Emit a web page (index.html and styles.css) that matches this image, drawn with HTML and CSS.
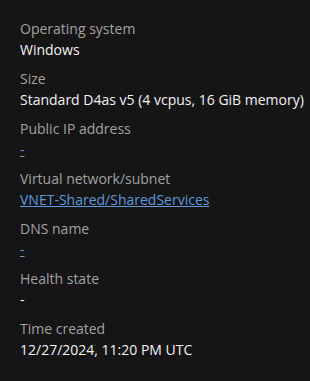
FILE: index.html
```html
<!DOCTYPE html>
<html lang="en">
  <head>
    <meta charset="UTF-8" />
    <title>VM properties</title>
    <link rel="stylesheet" href="styles.css">
  </head>
  <body>
    <dl class="props">
      <div class="prop">
        <dt>Operating system</dt>
        <dd>Windows</dd>
      </div>
      <div class="prop">
        <dt>Size</dt>
        <dd>Standard D4as v5 (4 vcpus, 16 GiB memory)</dd>
      </div>
      <div class="prop">
        <dt>Public IP address</dt>
        <dd><a href="#">-</a></dd>
      </div>
      <div class="prop">
        <dt>Virtual network/subnet</dt>
        <dd><a href="#">VNET-Shared/SharedServices</a></dd>
      </div>
      <div class="prop">
        <dt>DNS name</dt>
        <dd><a href="#">-</a></dd>
      </div>
      <div class="prop">
        <dt>Health state</dt>
        <dd>-</dd>
      </div>
      <div class="prop">
        <dt>Time created</dt>
        <dd>12/27/2024, 11:20 PM UTC</dd>
      </div>
    </dl>
  </body>
</html>
```

FILE: styles.css
```css
body {
  margin: 0;
  background: #151515;
  font-family: "Open Sans", "Noto Sans", sans-serif;
  font-size: 14px;
}
.props {
  margin: 0;
  padding: 18px 0 0 20px;
  display: flex;
  flex-direction: column;
  gap: 8px;
}
.prop dt {
  color: #a2a2a2;
  line-height: 22px;
}
.prop dd {
  margin: 0;
  color: #f2f2f2;
  line-height: 20px;
}
.prop a {
  color: #5b9bdc;
  text-decoration: underline;
}
```
